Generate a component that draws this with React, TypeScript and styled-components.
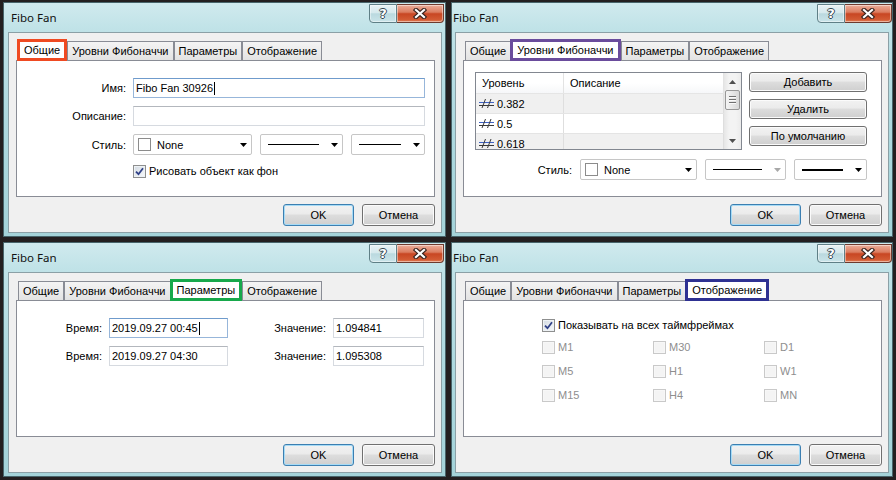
import React from 'react';
import styled, { createGlobalStyle, css } from 'styled-components';

const GlobalStyle = createGlobalStyle`
  html, body {
    margin: 0;
    padding: 0;
    background: #231f20;
  }
  body {
    font-family: "Liberation Sans", Arial, sans-serif;
    font-size: 11px;
    color: #000;
  }
  * {
    box-sizing: border-box;
  }
`;

const Screen = styled.div`
  width: 896px;
  height: 480px;
  padding: 2px 3px 3px;
  display: grid;
  grid-template-columns: 443px 442px;
  grid-template-rows: 235px 235px;
  column-gap: 5px;
  row-gap: 5px;
  background: #231f20;
  overflow: hidden;
`;

const Window = styled.div`
  display: flex;
  flex-direction: column;
  padding-bottom: 3px;
  border: 1px solid #48656b;
  background: linear-gradient(180deg, #d0eaee 0%, #bfe2e7 12%, #aed9df 50%, #a4d3d9 100%);
  overflow: hidden;
`;

const TitleBar = styled.div<{ $right?: boolean }>`
  height: 29px;
  flex: none;
  display: flex;
  justify-content: space-between;
  align-items: flex-start;
  padding-left: ${p => (p.$right ? 1 : 7)}px;
  padding-right: ${p => (p.$right ? 0 : 1)}px;
`;

const TitleText = styled.span`
  font-family: "Noto Sans", "Open Sans", sans-serif;
  font-size: 11.5px;
  line-height: 29px;
  color: #111;
`;

const CaptionGroup = styled.div`
  display: flex;
  height: 19px;
  margin-top: 1px;
`;

const CaptionButton = styled.div<{ $close?: boolean }>`
  width: ${p => (p.$close ? 47 : 28)}px;
  height: 100%;
  display: flex;
  align-items: center;
  justify-content: center;
  box-shadow: inset 0 0 0 1px rgba(255, 255, 255, 0.45);
  ${p =>
    p.$close
      ? css`
          border: 1px solid #6d3a2e;
          border-left: none;
          border-radius: 0 0 4px 0;
          background: linear-gradient(180deg, #eaae9b 0%, #dc7d60 42%, #c84623 52%, #d25a33 85%, #e28058 100%);
        `
      : css`
          border: 1px solid #5f7f86;
          border-radius: 0 0 0 4px;
          background: linear-gradient(180deg, #e8f3f5 0%, #d6e9ed 45%, #bad9df 52%, #cae4e9 100%);
        `}
`;

const HelpGlyph = styled.span`
  font-family: "DejaVu Sans", sans-serif;
  font-weight: bold;
  font-size: 13px;
  line-height: 1;
  color: #fff;
  text-shadow: 1px 0 #34474f, -1px 0 #34474f, 0 1px #34474f, 0 -1px #34474f;
`;

const Client = styled.div<{ $right?: boolean }>`
  flex: 1;
  display: flex;
  flex-direction: column;
  margin: 0 3px 0 ${p => (p.$right ? 3 : 4)}px;
  padding: 7px 6px 6px 7px;
  background: #f0f0f0;
  border: 1px solid #8ba0a6;
`;

const TabStrip = styled.div`
  display: flex;
  align-items: flex-end;
  height: 20px;
  flex: none;
  padding-left: 2px;
  position: relative;
  z-index: 1;
`;

const Tab = styled.div<{ $active?: boolean; $mark: string }>`
  height: 19px;
  padding: 0 4px;
  line-height: 18px;
  white-space: nowrap;
  border: 1px solid #898c95;
  border-bottom: none;
  background: linear-gradient(180deg, #f4f4f4, #e3e3e3);
  color: #000;
  ${p =>
    p.$active &&
    css`
      height: 22px;
      line-height: 16px;
      margin: 0 0 -1px -1px;
      border: 3px solid ${p.$mark};
      background: #fff;
      position: relative;
      z-index: 2;
    `}
`;

const Panel = styled.div`
  flex: 1;
  background: #fff;
  border: 1px solid #898c95;
  display: flex;
  flex-direction: column;
`;

const Footer = styled.div`
  display: flex;
  justify-content: flex-end;
  gap: 8px;
  margin-top: 7px;
  flex: none;
`;

const PushButton = styled.div<{ $default?: boolean; $w: number; $h?: number }>`
  width: ${p => p.$w}px;
  height: ${p => p.$h ?? 22}px;
  display: flex;
  align-items: center;
  justify-content: center;
  border: 1px solid ${p => (p.$default ? '#3c7fb1' : '#707070')};
  border-radius: 3px;
  background: linear-gradient(180deg, #f2f2f2 0%, #ebebeb 45%, #dddddd 50%, #cfcfcf 100%);
  box-shadow: inset 0 0 0 1px ${p => (p.$default ? '#a6dbf6' : '#fbfbfb')};
  color: #000;
  white-space: nowrap;
`;

/* --- form parts --- */

const FormGrid = styled.div`
  display: grid;
  grid-template-columns: 109px 1fr;
  column-gap: 7px;
  row-gap: 8px;
  align-items: center;
  padding: 17px 9px 0 0;
`;

const FieldLabel = styled.span`
  text-align: right;
  white-space: nowrap;
`;

const TextBox = styled.div<{ $focus?: boolean }>`
  height: 20px;
  display: flex;
  align-items: center;
  padding: 0 2px;
  background: #fff;
  border: 1px solid ${p => (p.$focus ? '#97b6da' : '#d6dae0')};
  border-top-color: ${p => (p.$focus ? '#6f9bcc' : '#b3b7bd')};
  white-space: nowrap;
`;

const Caret = styled.span`
  display: inline-block;
  width: 1px;
  height: 13px;
  background: #000;
  margin-left: 1px;
`;

const ComboRow = styled.div`
  display: flex;
  align-items: center;
  gap: 8px;
`;

const Combo = styled.div<{ $w: number }>`
  width: ${p => p.$w}px;
  height: 21px;
  display: flex;
  align-items: center;
  padding: 0 4px;
  background: #fff;
  border: 1px solid #c6c6c6;
  border-radius: 2px;
  flex: none;
`;

const Swatch = styled.span`
  width: 13px;
  height: 13px;
  border: 1px solid #8c8c8c;
  background: #fff;
  flex: none;
`;

const ComboText = styled.span`
  margin-left: 6px;
`;

const LineSample = styled.span<{ $thick?: number }>`
  flex: 1;
  height: ${p => p.$thick ?? 1}px;
  background: #000;
  margin: 0 12px 0 3px;
`;

const ArrowBox = styled.span`
  margin-left: auto;
  display: flex;
  flex: none;
`;

const Arrow = ({ color = '#000', up = false }: { color?: string; up?: boolean }) => (
  <ArrowBox>
    <svg width="7" height="4" viewBox="0 0 7 4">
      <path d={up ? 'M0 4H7L3.5 0z' : 'M0 0H7L3.5 4z'} fill={color} />
    </svg>
  </ArrowBox>
);

const CheckLine = styled.div<{ $disabled?: boolean }>`
  display: flex;
  align-items: center;
  gap: 3px;
  height: 16px;
  white-space: nowrap;
  color: ${p => (p.$disabled ? '#8e8e8e' : '#000')};
`;

const Box = styled.span<{ $disabled?: boolean }>`
  width: 13px;
  height: 13px;
  flex: none;
  display: inline-flex;
  align-items: center;
  justify-content: center;
  border: 1px solid ${p => (p.$disabled ? '#c9c9c9' : '#8e8f8f')};
  background: ${p => (p.$disabled ? '#f4f4f4' : 'linear-gradient(135deg, #d3dbe3, #f7f9fb)')};
  box-shadow: inset 0 0 0 1px ${p => (p.$disabled ? '#f7f7f7' : '#eef2f5')};
`;

const CheckBox = ({ checked, disabled }: { checked?: boolean; disabled?: boolean }) => (
  <Box $disabled={disabled}>
    {checked && (
      <svg width="9" height="9" viewBox="0 0 9 9">
        <path d="M1 4.6L3.5 7.2L8 1.3" stroke="#2f4087" strokeWidth="1.8" fill="none" />
      </svg>
    )}
  </Box>
);

/* --- Общие --- */

const GeneralPage = () => (
  <FormGrid>
    <FieldLabel>Имя:</FieldLabel>
    <TextBox $focus>
      Fibo Fan 30926
      <Caret />
    </TextBox>
    <FieldLabel>Описание:</FieldLabel>
    <TextBox />
    <FieldLabel>Стиль:</FieldLabel>
    <ComboRow>
      <Combo $w={119}>
        <Swatch />
        <ComboText>None</ComboText>
        <Arrow />
      </Combo>
      <Combo $w={83}>
        <LineSample />
        <Arrow />
      </Combo>
      <Combo $w={74}>
        <LineSample />
        <Arrow />
      </Combo>
    </ComboRow>
    <span />
    <CheckLine>
      <CheckBox checked />
      Рисовать объект как фон
    </CheckLine>
  </FormGrid>
);

/* --- Уровни Фибоначчи --- */

const LevelsTop = styled.div`
  display: flex;
  gap: 7px;
  padding: 11px 14px 0 11px;
`;

const ListView = styled.div`
  width: 269px;
  height: 78px;
  display: flex;
  border: 1px solid #828790;
  background: #fff;
  overflow: hidden;
`;

const ListBody = styled.div`
  flex: 1;
  display: flex;
  flex-direction: column;
  min-width: 0;
`;

const ListHeader = styled.div`
  height: 21px;
  flex: none;
  display: grid;
  grid-template-columns: 88px 1fr;
  background: linear-gradient(180deg, #ffffff 0%, #ffffff 50%, #f6f7f9 100%);
  border-bottom: 1px solid #e5e5e5;
`;

const HeaderCell = styled.div`
  display: flex;
  align-items: center;
  padding-left: 6px;
  border-right: 1px solid #e3e3e3;
`;

const ListRow = styled.div<{ $alt?: boolean }>`
  height: 20px;
  flex: none;
  display: grid;
  grid-template-columns: 88px 1fr;
  background: ${p => (p.$alt ? '#f0f0f0' : '#fff')};
  border-bottom: 1px solid #e4e4e4;
`;

const ListCell = styled.div`
  display: flex;
  align-items: center;
  gap: 3px;
  padding-left: 3px;
  border-right: 1px solid #dedede;
`;

const ScrollBar = styled.div`
  width: 17px;
  flex: none;
  display: flex;
  flex-direction: column;
  background: linear-gradient(90deg, #e6e6e6, #f3f3f3 30%, #f3f3f3 70%, #ebebeb);
`;

const ScrollArrow = styled.div`
  height: 17px;
  flex: none;
  display: flex;
  align-items: center;
  justify-content: center;
  & > span {
    margin: 0;
  }
`;

const Thumb = styled.div`
  height: 20px;
  flex: none;
  margin: 0 1px;
  display: flex;
  flex-direction: column;
  align-items: center;
  justify-content: center;
  gap: 1px;
  border: 1px solid #979797;
  border-radius: 2px;
  background: linear-gradient(90deg, #f4f4f4, #e6e6e6 50%, #d8d8d8);
`;

const Grip = styled.span`
  width: 7px;
  height: 1px;
  background: #707070;
  box-shadow: 0 1px 0 #fafafa;
  margin-bottom: 1px;
`;

const Track = styled.div`
  flex: 1;
`;

const SideButtons = styled.div`
  display: flex;
  flex-direction: column;
  gap: 7px;
`;

const StyleRow = styled.div`
  display: flex;
  justify-content: flex-end;
  align-items: center;
  gap: 8px;
  margin-top: 9px;
  padding-right: 14px;
`;

const LevelIcon = () => (
  <svg width="15" height="9" viewBox="0 0 15 9">
    <path d="M0 3.5H15" stroke="#3f63c6" strokeWidth="1" fill="none" />
    <path d="M0 6.5H15M3 9L6.5 0M8.5 9L12 0" stroke="#3a3a3a" strokeWidth="1" fill="none" />
  </svg>
);

const levels = ['0.382', '0.5', '0.618'];

const LevelsPage = () => (
  <>
    <LevelsTop>
      <ListView>
        <ListBody>
          <ListHeader>
            <HeaderCell>Уровень</HeaderCell>
            <HeaderCell>Описание</HeaderCell>
          </ListHeader>
          {levels.map((lv, i) => (
            <ListRow key={lv} $alt={i % 2 === 0}>
              <ListCell>
                <LevelIcon />
                {lv}
              </ListCell>
              <ListCell />
            </ListRow>
          ))}
        </ListBody>
        <ScrollBar>
          <ScrollArrow>
            <Arrow up color="#505050" />
          </ScrollArrow>
          <Thumb>
            <Grip />
            <Grip />
            <Grip />
          </Thumb>
          <Track />
          <ScrollArrow>
            <Arrow color="#505050" />
          </ScrollArrow>
        </ScrollBar>
      </ListView>
      <SideButtons>
        <PushButton $w={118} $h={20}>Добавить</PushButton>
        <PushButton $w={118} $h={20}>Удалить</PushButton>
        <PushButton $w={118} $h={20}>По умолчанию</PushButton>
      </SideButtons>
    </LevelsTop>
    <StyleRow>
      <FieldLabel>Стиль:</FieldLabel>
      <Combo $w={117}>
        <Swatch />
        <ComboText>None</ComboText>
        <Arrow />
      </Combo>
      <Combo $w={81}>
        <LineSample />
        <Arrow color="#a8a8a8" />
      </Combo>
      <Combo $w={73}>
        <LineSample $thick={2} />
        <Arrow />
      </Combo>
    </StyleRow>
  </>
);

/* --- Параметры --- */

const ParamGrid = styled.div`
  display: grid;
  grid-template-columns: 85px 119px 91px 91px;
  column-gap: 7px;
  row-gap: 8px;
  align-items: center;
  padding-top: 17px;
`;

const ParamsPage = () => (
  <ParamGrid>
    <FieldLabel>Время:</FieldLabel>
    <TextBox $focus>
      2019.09.27 00:45
      <Caret />
    </TextBox>
    <FieldLabel>Значение:</FieldLabel>
    <TextBox>1.094841</TextBox>
    <FieldLabel>Время:</FieldLabel>
    <TextBox>2019.09.27 04:30</TextBox>
    <FieldLabel>Значение:</FieldLabel>
    <TextBox>1.095308</TextBox>
  </ParamGrid>
);

/* --- Отображение --- */

const DisplayBox = styled.div`
  padding: 16px 0 0 78px;
`;

const FrameGrid = styled.div`
  display: grid;
  grid-template-columns: repeat(3, 111px);
  row-gap: 8px;
  margin-top: 6px;
`;

const frames = ['M1', 'M30', 'D1', 'M5', 'H1', 'W1', 'M15', 'H4', 'MN'];

const DisplayPage = () => (
  <DisplayBox>
    <CheckLine>
      <CheckBox checked />
      Показывать на всех таймфреймах
    </CheckLine>
    <FrameGrid>
      {frames.map(f => (
        <CheckLine key={f} $disabled>
          <CheckBox disabled />
          {f}
        </CheckLine>
      ))}
    </FrameGrid>
  </DisplayBox>
);

/* --- dialog shell --- */

const tabs = ['Общие', 'Уровни Фибоначчи', 'Параметры', 'Отображение'];

interface DialogProps {
  active: number;
  mark: string;
  right?: boolean;
  children: React.ReactNode;
}

const Dialog = ({ active, mark, right, children }: DialogProps) => (
  <Window>
    <TitleBar $right={right}>
      <TitleText>Fibo Fan</TitleText>
      <CaptionGroup>
        <CaptionButton>
          <HelpGlyph>?</HelpGlyph>
        </CaptionButton>
        <CaptionButton $close>
          <svg width="14" height="11" viewBox="0 0 14 11">
            <path d="M3 2L11 9M11 2L3 9" stroke="#3b2520" strokeWidth="4.4" strokeLinecap="square" fill="none" />
            <path d="M3 2L11 9M11 2L3 9" stroke="#fff" strokeWidth="2.2" strokeLinecap="square" fill="none" />
          </svg>
        </CaptionButton>
      </CaptionGroup>
    </TitleBar>
    <Client $right={right}>
      <TabStrip>
        {tabs.map((t, i) => (
          <Tab key={t} $active={i === active} $mark={mark}>
            {t}
          </Tab>
        ))}
      </TabStrip>
      <Panel>{children}</Panel>
      <Footer>
        <PushButton $default $w={71}>OK</PushButton>
        <PushButton $w={73}>Отмена</PushButton>
      </Footer>
    </Client>
  </Window>
);

export default function App() {
  return (
    <>
      <GlobalStyle />
      <Screen>
        <Dialog active={0} mark="#ef4a22">
          <GeneralPage />
        </Dialog>
        <Dialog active={1} mark="#6a4c9c" right>
          <LevelsPage />
        </Dialog>
        <Dialog active={2} mark="#17a84b">
          <ParamsPage />
        </Dialog>
        <Dialog active={3} mark="#2e3192" right>
          <DisplayPage />
        </Dialog>
      </Screen>
    </>
  );
}
